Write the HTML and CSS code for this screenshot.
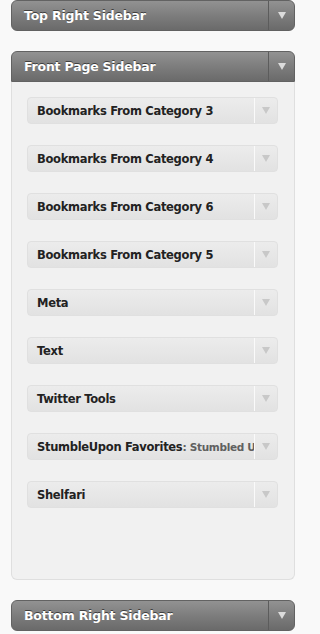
FILE: index.html
```html
<!DOCTYPE html>
<html>
<head>
<meta charset="utf-8">
<link rel="stylesheet" href="styles.css">
</head>
<body>
<div class="sidebars">
  <div class="area closed">
    <div class="area-head">
      <span class="area-title">Top Right Sidebar</span>
      <span class="area-toggle"><span class="tri tri-light"></span></span>
    </div>
  </div>

  <div class="area open">
    <div class="area-head">
      <span class="area-title">Front Page Sidebar</span>
      <span class="area-toggle"><span class="tri tri-light"></span></span>
    </div>
    <div class="area-body">
      <div class="widget"><span class="w-title">Bookmarks From Category 3</span><span class="w-toggle"><span class="tri tri-grey"></span></span></div>
      <div class="widget"><span class="w-title">Bookmarks From Category 4</span><span class="w-toggle"><span class="tri tri-grey"></span></span></div>
      <div class="widget"><span class="w-title">Bookmarks From Category 6</span><span class="w-toggle"><span class="tri tri-grey"></span></span></div>
      <div class="widget"><span class="w-title">Bookmarks From Category 5</span><span class="w-toggle"><span class="tri tri-grey"></span></span></div>
      <div class="widget"><span class="w-title">Meta</span><span class="w-toggle"><span class="tri tri-grey"></span></span></div>
      <div class="widget"><span class="w-title">Text</span><span class="w-toggle"><span class="tri tri-grey"></span></span></div>
      <div class="widget"><span class="w-title">Twitter Tools</span><span class="w-toggle"><span class="tri tri-grey"></span></span></div>
      <div class="widget"><span class="w-title">StumbleUpon Favorites<span class="in-title">: Stumbled Upon</span></span><span class="w-toggle"><span class="tri tri-grey"></span></span></div>
      <div class="widget"><span class="w-title">Shelfari</span><span class="w-toggle"><span class="tri tri-grey"></span></span></div>
    </div>
  </div>

  <div class="area closed">
    <div class="area-head">
      <span class="area-title">Bottom Right Sidebar</span>
      <span class="area-toggle"><span class="tri tri-light"></span></span>
    </div>
  </div>
</div>
</body>
</html>
```

FILE: styles.css
```css
html, body {
  margin: 0;
  padding: 0;
  background: #f9f9f9;
}

body {
  font-family: "DejaVu Sans", "Liberation Sans", sans-serif;
}

.sidebars {
  width: 284px;
  margin-left: 11px;
  display: flex;
  flex-direction: column;
  gap: 20px;
}

.area-head {
  display: flex;
  align-items: stretch;
  height: 29px;
  border: 1px solid #626262;
  border-radius: 6px;
  background: linear-gradient(to bottom, #929292 0%, #7d7d7d 50%, #6a6a6a 100%);
  color: #fff;
}

.open .area-head {
  border-radius: 6px 6px 0 0;
}

.area-title {
  flex: 1;
  display: flex;
  align-items: center;
  padding-left: 12px;
  font-size: 12.5px;
  font-weight: bold;
  text-shadow: 0 -1px 0 #3f3f3f;
  letter-spacing: -0.2px;
}

.area-toggle {
  width: 25px;
  border-left: 1px solid #5c5c5c;
  display: flex;
  align-items: center;
  justify-content: center;
}

.tri {
  display: block;
  width: 0;
  height: 0;
  border-left: 4px solid transparent;
  border-right: 4px solid transparent;
  border-top: 7px solid #dcdcdc;
}

.tri-grey {
  border-top-color: #c8c8c8;
}

.area-body {
  background: #f1f1f1;
  border: 1px solid #dfdfdf;
  border-top: none;
  border-radius: 0 0 6px 6px;
  padding: 15px 16px 71px 15px;
  display: flex;
  flex-direction: column;
  gap: 21px;
}

.widget {
  display: flex;
  height: 25px;
  border: 1px solid #e0e0e0;
  border-radius: 4px;
  background: linear-gradient(to bottom, #ececec 0%, #e2e2e2 100%);
}

.w-title {
  flex: 1;
  min-width: 0;
  display: flex;
  align-items: center;
  padding-left: 9px;
  font-size: 11.5px;
  font-weight: bold;
  color: #222;
  white-space: nowrap;
  overflow: hidden;
  letter-spacing: -0.3px;
}

.in-title {
  color: #606060;
  font-size: 10.5px;
}

.w-toggle {
  width: 22px;
  border-left: 1px solid #fafafa;
  display: flex;
  align-items: center;
  justify-content: center;
}
```
